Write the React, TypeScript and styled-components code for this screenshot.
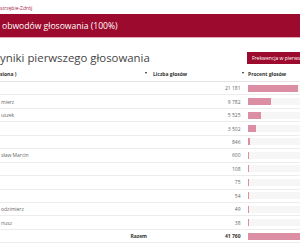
import styled, { createGlobalStyle } from "styled-components";

const GlobalStyle = createGlobalStyle`
    html, body {
        margin: 0;
        padding: 0;
        background: #ffffff;
        overflow: hidden;
    }
    body {
        font-family: "Open Sans", "Liberation Sans", sans-serif;
    }
`;

type Result = { name: string; votes: number };

const results: Result[] = [
    { name: "", votes: 21181 },
    { name: "mierz", votes: 9782 },
    { name: "uszek", votes: 5525 },
    { name: "", votes: 3502 },
    { name: "", votes: 846 },
    { name: "sław Marcin", votes: 600 },
    { name: "", votes: 108 },
    { name: "", votes: 75 },
    { name: "", votes: 54 },
    { name: "odzimierz", votes: 49 },
    { name: "riusz", votes: 38 },
];

const total = results.reduce((sum, r) => sum + r.votes, 0);
const BAR_SCALE = 98.6;

const formatNumber = (n: number) => String(n).replace(/\B(?=(\d{3})+(?!\d))/g, " ");

export default function App() {
    return (
        <Page>
            <GlobalStyle />
            <Breadcrumb>strzębie-Zdrój</Breadcrumb>
            <Banner>obwodów głosowania (100%)</Banner>

            <TitleRow>
                <Title>yniki pierwszego głosowania</Title>
                <TurnoutButton>Frekwencja w pierwszym głosowaniu</TurnoutButton>
            </TitleRow>

            <Table>
                <HeaderRow>
                    <HeadCell $pad="0 3px 0 0">
                        <span>siona )</span>
                        <SortMark />
                    </HeadCell>
                    <HeadCell $pad="0 3px">
                        <span>Liczba głosów</span>
                        <SortMark />
                    </HeadCell>
                    <HeadCell $pad="0 0 0 1px">
                        <span>Procent głosów</span>
                    </HeadCell>
                </HeaderRow>

                {results.map((r, i) => (
                    <Row key={i}>
                        <NameCell>{r.name}</NameCell>
                        <NumberCell>{formatNumber(r.votes)}</NumberCell>
                        <BarCell>
                            <Track>
                                <Bar style={{ width: `${(r.votes / total) * BAR_SCALE}px` }} />
                            </Track>
                        </BarCell>
                    </Row>
                ))}

                <Row $total>
                    <NameCell $right>Razem</NameCell>
                    <NumberCell>{formatNumber(total)}</NumberCell>
                    <BarCell>
                        <Track>
                            <Bar style={{ width: `${BAR_SCALE}px` }} />
                        </Track>
                    </BarCell>
                </Row>
            </Table>
        </Page>
    );
}

const Page = styled.div`
    width: 300px;
    height: 250px;
    overflow: hidden;
`;

const Breadcrumb = styled.div`
    height: 14px;
    display: flex;
    align-items: center;
    padding-top: 2px;
    box-sizing: border-box;
    font-size: 5px;
    color: #a3213f;
    white-space: nowrap;
`;

const Banner = styled.div`
    height: 24px;
    box-sizing: border-box;
    display: flex;
    align-items: center;
    padding: 1px 0 0 2px;
    background: #9c0a2d;
    border-bottom: 1px solid #e2a6b4;
    color: #ffffff;
    font-size: 8.6px;
    white-space: nowrap;
`;

const TitleRow = styled.div`
    display: flex;
    justify-content: space-between;
    align-items: center;
    height: 19px;
    margin-top: 10px;
`;

const Title = styled.h2`
    margin: 0;
    font-size: 11.4px;
    font-weight: 400;
    color: #454545;
    white-space: nowrap;
`;

const TurnoutButton = styled.button`
    width: 53px;
    height: 12px;
    padding: 0 0 0 5px;
    border: 0;
    background: #9c0a2d;
    color: #ffffff;
    font-family: inherit;
    font-size: 5px;
    text-align: left;
    white-space: nowrap;
    overflow: hidden;
    cursor: pointer;
`;

const Table = styled.div`
    display: flex;
    flex-direction: column;
`;

const columns = `
    display: grid;
    grid-template-columns: 150px 97px 1fr;
    align-items: center;
    box-sizing: border-box;
`;

const HeaderRow = styled.div`
    ${columns}
    height: 15px;
    border-bottom: 1px solid #e4e4e4;
`;

const HeadCell = styled.div<{ $pad: string }>`
    display: flex;
    justify-content: space-between;
    align-items: center;
    padding: ${(p) => p.$pad};
    font-size: 5px;
    font-weight: 700;
    color: #333333;
    white-space: nowrap;
`;

const SortMark = styled.i`
    width: 0;
    height: 0;
    margin-bottom: 3px;
    border-left: 1.3px solid transparent;
    border-right: 1.3px solid transparent;
    border-top: 2px solid #222222;
`;

const Row = styled.div<{ $total?: boolean }>`
    ${columns}
    height: 13.45px;
    border-bottom: 1px solid #ececec;
    font-size: 5px;
    font-weight: ${(p) => (p.$total ? 700 : 400)};
    color: ${(p) => (p.$total ? "#333333" : "#666666")};
`;

const NameCell = styled.div<{ $right?: boolean }>`
    padding: 0 3px 0 1px;
    text-align: ${(p) => (p.$right ? "right" : "left")};
    white-space: nowrap;
`;

const NumberCell = styled.div`
    padding-right: 6.5px;
    text-align: right;
    white-space: nowrap;
`;

const BarCell = styled.div`
    padding-left: 1px;
`;

const Track = styled.div`
    height: 7px;
    background: #f6f6f6;
`;

const Bar = styled.div`
    height: 100%;
    background: #dc8ea5;
`;
